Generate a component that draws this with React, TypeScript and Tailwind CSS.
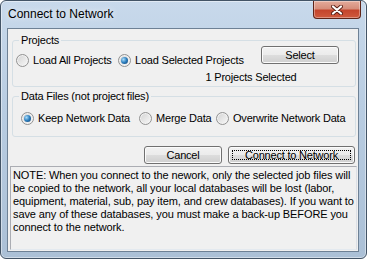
const btn =
  "flex h-[18px] items-center justify-center rounded-[3px] border border-[#707070] bg-[linear-gradient(180deg,#f2f2f2_0%,#ebebeb_50%,#dddddd_51%,#cfcfcf_100%)] shadow-[inset_0_0_0_1px_#fbfbfb] text-[11px] leading-[13px]";

const Radio = ({
  label,
  checked,
  className,
}: {
  label: string;
  checked?: boolean;
  className?: string;
}) => (
  <label className={"flex items-center gap-[4px] " + (className ?? "")}>
    <span className="flex h-[13px] w-[13px] shrink-0 items-center justify-center rounded-full border border-[#929292] bg-[linear-gradient(135deg,#d2d2d2,#f9f9f9)] shadow-[inset_0_0_0_1px_#f2f2f2]">
      {checked && (
        <span className="h-[7px] w-[7px] rounded-full bg-[radial-gradient(circle_at_35%_35%,#a9ddfb,#2a7cbc_50%,#113d6b)]" />
      )}
    </span>
    <span className="whitespace-nowrap">{label}</span>
  </label>
);

export default function App() {
  return (
    <div className="h-[259px] w-[367px] bg-white font-['Liberation_Sans',Arial,sans-serif] text-black">
      <div className="flex h-full flex-col rounded-[6px] border border-[#435466] bg-[linear-gradient(180deg,#c8d9eb_0%,#b9cde2_40%,#abc0d6_100%)] shadow-[inset_0_0_0_1px_rgba(255,255,255,0.45)]">
        {/* title bar */}
        <div className="flex h-[27px] shrink-0 items-start">
          <span className="ml-[7px] mt-[6px] text-[12px] leading-[15px] [text-shadow:0_0_6px_#fff]">
            Connect to Network
          </span>
          <button className="ml-auto mr-[5px] flex h-[18px] w-[48px] items-center justify-center rounded-b-[4px] border border-t-0 border-[#5f2418] bg-[linear-gradient(180deg,#e4ab9b_0%,#d68e7b_45%,#c4452c_55%,#cf5a3e_100%)] shadow-[inset_0_0_0_1px_rgba(255,255,255,0.35)]">
            <svg width="12" height="10" viewBox="0 0 12 10">
              <path d="M2 1.5 L10 8.5 M10 1.5 L2 8.5" stroke="#5a1f14" strokeWidth="4" strokeLinecap="round" />
              <path d="M2 1.5 L10 8.5 M10 1.5 L2 8.5" stroke="#fff" strokeWidth="2.2" strokeLinecap="round" />
            </svg>
          </button>
        </div>

        {/* client area */}
        <div className="mb-[6px] ml-[6px] mr-[7px] flex flex-1 flex-col border border-[#6e8195] bg-[#f0f0f0] text-[11px] leading-[13px] tracking-[-0.2px]">
          <div className="relative ml-[4px] mr-[2px] mt-[11px] h-[47px] rounded-[3px] border border-[#d5dfe5]">
            <span className="absolute -top-[7px] left-[6px] bg-[#f0f0f0] px-[2px]">Projects</span>
            <div className="flex items-start">
              <div className="ml-[3px] mt-[13px] flex">
                <Radio label="Load All Projects" className="w-[102px]" />
                <Radio label="Load Selected Projects" checked />
              </div>
              <button className={btn + " ml-auto mr-[16px] mt-[5px] w-[78px]"}>Select</button>
            </div>
            <div className="ml-[178px] mt-[4px] w-[120px] text-center">1 Projects Selected</div>
          </div>

          <div className="relative ml-[4px] mr-[2px] mt-[9px] h-[41px] rounded-[3px] border border-[#d5dfe5]">
            <span className="absolute -top-[7px] left-[6px] bg-[#f0f0f0] px-[2px]">
              Data Files (not project files)
            </span>
            <div className="ml-[8px] mt-[15px] flex">
              <Radio label="Keep Network Data" checked className="w-[118px]" />
              <Radio label="Merge Data" className="w-[77px]" />
              <Radio label="Overwrite Network Data" />
            </div>
          </div>

          <div className="mr-[3px] mt-[9px] flex justify-end gap-[6px]">
            <button className={btn + " w-[78px]"}>Cancel</button>
            <button className={btn + " relative w-[127px] border-[#4b6a8c]"}>
              <span className="absolute inset-[3px] border border-dotted border-black" />
              Connect to Network
            </button>
          </div>

          <div className="mb-[1px] ml-[2px] mr-[1px] mt-[2px] flex-1 whitespace-nowrap border border-[#abadb3] border-b-[#e3e9ef] border-r-[#dbdfe6] bg-[#f0f0f0] pl-[2px] pt-[2px] tracking-[-0.1px]">
            NOTE: When you connect to the nework, only the selected job files will
            <br />
            be copied to the network, all your local databases will be lost (labor,
            <br />
            equipment, material, sub, pay item, and crew databases). If you want to
            <br />
            save any of these databases, you must make a back-up BEFORE you
            <br />
            connect to the network.
          </div>
        </div>
      </div>
    </div>
  );
}
